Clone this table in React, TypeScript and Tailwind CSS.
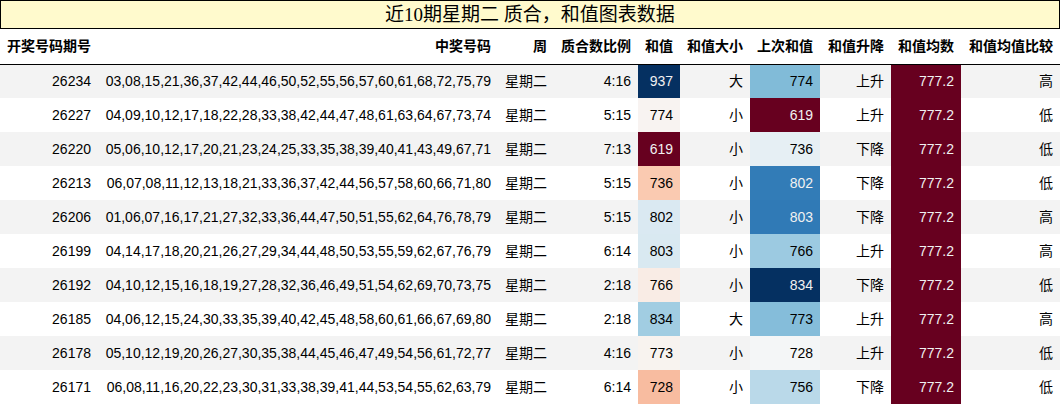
import React from 'react';

type Row = {
  issue: string;
  nums: string;
  week: string;
  ratio: string;
  sum: number;
  size: string;
  prev: number;
  trend: string;
  avg: number;
  cmp: string;
};

const rows: Row[] = [
  { issue: '26234', nums: '03,08,15,21,36,37,42,44,46,50,52,55,56,57,60,61,68,72,75,79', week: '星期二', ratio: '4:16', sum: 937, size: '大', prev: 774, trend: '上升', avg: 777.2, cmp: '高' },
  { issue: '26227', nums: '04,09,10,12,17,18,22,28,33,38,42,44,47,48,61,63,64,67,73,74', week: '星期二', ratio: '5:15', sum: 774, size: '小', prev: 619, trend: '上升', avg: 777.2, cmp: '低' },
  { issue: '26220', nums: '05,06,10,12,17,20,21,23,24,25,33,35,38,39,40,41,43,49,67,71', week: '星期二', ratio: '7:13', sum: 619, size: '小', prev: 736, trend: '下降', avg: 777.2, cmp: '低' },
  { issue: '26213', nums: '06,07,08,11,12,13,18,21,33,36,37,42,44,56,57,58,60,66,71,80', week: '星期二', ratio: '5:15', sum: 736, size: '小', prev: 802, trend: '下降', avg: 777.2, cmp: '低' },
  { issue: '26206', nums: '01,06,07,16,17,21,27,32,33,36,44,47,50,51,55,62,64,76,78,79', week: '星期二', ratio: '5:15', sum: 802, size: '小', prev: 803, trend: '下降', avg: 777.2, cmp: '高' },
  { issue: '26199', nums: '04,14,17,18,20,21,26,27,29,34,44,48,50,53,55,59,62,67,76,79', week: '星期二', ratio: '6:14', sum: 803, size: '小', prev: 766, trend: '上升', avg: 777.2, cmp: '高' },
  { issue: '26192', nums: '04,10,12,15,16,18,19,27,28,32,36,46,49,51,54,62,69,70,73,75', week: '星期二', ratio: '2:18', sum: 766, size: '小', prev: 834, trend: '下降', avg: 777.2, cmp: '低' },
  { issue: '26185', nums: '04,06,12,15,24,30,33,35,39,40,42,45,48,58,60,61,66,67,69,80', week: '星期二', ratio: '2:18', sum: 834, size: '大', prev: 773, trend: '上升', avg: 777.2, cmp: '高' },
  { issue: '26178', nums: '05,10,12,19,20,26,27,30,35,38,44,45,46,47,49,54,56,61,72,77', week: '星期二', ratio: '4:16', sum: 773, size: '小', prev: 728, trend: '上升', avg: 777.2, cmp: '低' },
  { issue: '26171', nums: '06,08,11,16,20,22,23,30,31,33,38,39,41,44,53,54,55,62,63,79', week: '星期二', ratio: '6:14', sum: 728, size: '小', prev: 756, trend: '下降', avg: 777.2, cmp: '低' },
];

// matplotlib RdBu stops
const rdbu = ['#67001f', '#b2182b', '#d6604d', '#f4a582', '#fddbc7', '#f7f7f7', '#d1e5f0', '#92c5de', '#4393c3', '#2166ac', '#053061'];

const hex = (h: string) => [1, 3, 5].map(i => parseInt(h.slice(i, i + 2), 16));

const gradient = (v: number, min: number, max: number) => {
  const t = max === min ? 0 : (v - min) / (max - min);
  const pos = t * (rdbu.length - 1);
  const i = Math.min(Math.floor(pos), rdbu.length - 2);
  const f = pos - i;
  const a = hex(rdbu[i]);
  const b = hex(rdbu[i + 1]);
  const c = a.map((x, k) => Math.round(x + (b[k] - x) * f));
  // relative luminance to pick the text colour
  const lin = c.map(x => {
    const s = x / 255;
    return s <= 0.04045 ? s / 12.92 : Math.pow((s + 0.055) / 1.055, 2.4);
  });
  const lum = 0.2126 * lin[0] + 0.7152 * lin[1] + 0.0722 * lin[2];
  return {
    backgroundColor: `rgb(${c[0]},${c[1]},${c[2]})`,
    color: lum < 0.408 ? '#f1f1f1' : '#000000',
  };
};

const colRange = (key: 'sum' | 'prev' | 'avg') => {
  const vals = rows.map(r => r[key]);
  return [Math.min(...vals), Math.max(...vals)] as const;
};

const headers = ['开奖号码期号', '中奖号码', '周', '质合数比例', '和值', '和值大小', '上次和值', '和值升降', '和值均数', '和值均值比较'];

const App: React.FC = () => {
  const [sumMin, sumMax] = colRange('sum');
  const [prevMin, prevMax] = colRange('prev');
  const [avgMin, avgMax] = colRange('avg');

  return (
    <div className="w-[1060px] bg-white text-black font-['Liberation_Sans','Noto_Sans_CJK_SC',sans-serif]">
      <div className="h-[29px] border border-black bg-[#fffacd] flex items-center justify-center text-[19px] leading-none font-['Liberation_Serif','Noto_Sans_CJK_SC',serif]">
        近10期星期二 质合，和值图表数据
      </div>

      <table className="w-full table-fixed border-collapse text-[14px]">
        <colgroup>
          <col className="w-[98px]" />
          <col className="w-[400px]" />
          <col className="w-[56px]" />
          <col className="w-[84px]" />
          <col className="w-[42px]" />
          <col className="w-[70px]" />
          <col className="w-[70px]" />
          <col className="w-[71px]" />
          <col className="w-[70px]" />
          <col className="w-[99px]" />
        </colgroup>
        <thead>
          <tr className="h-[35px] border-b border-black">
            {headers.map(h => (
              <th key={h} className="px-[7px] text-right font-bold whitespace-nowrap">
                {h}
              </th>
            ))}
          </tr>
        </thead>
        <tbody>
          {rows.map((r, i) => (
            <tr key={r.issue} className={`h-[34px] ${i % 2 === 0 ? 'bg-[#f3f3f3]' : 'bg-white'}`}>
              <td className="px-[7px] text-right">{r.issue}</td>
              <td className="px-[7px] text-right whitespace-nowrap">{r.nums}</td>
              <td className="px-[7px] text-right whitespace-nowrap">{r.week}</td>
              <td className="px-[7px] text-right">{r.ratio}</td>
              <td className="px-[7px] text-right" style={gradient(r.sum, sumMin, sumMax)}>{r.sum}</td>
              <td className="px-[7px] text-right">{r.size}</td>
              <td className="px-[7px] text-right" style={gradient(r.prev, prevMin, prevMax)}>{r.prev}</td>
              <td className="px-[7px] text-right">{r.trend}</td>
              <td className="px-[7px] text-right" style={gradient(r.avg, avgMin, avgMax)}>{r.avg.toFixed(1)}</td>
              <td className="px-[7px] text-right">{r.cmp}</td>
            </tr>
          ))}
        </tbody>
      </table>
    </div>
  );
};

export default App;
